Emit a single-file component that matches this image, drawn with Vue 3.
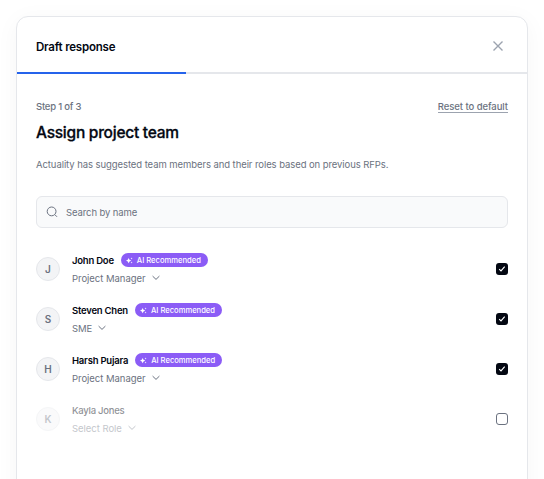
<script setup>
import { reactive } from 'vue'

const members = reactive([
  { name: 'John Doe', role: 'Project Manager', recommended: true, selected: true },
  { name: 'Steven Chen', role: 'SME', recommended: true, selected: true },
  { name: 'Harsh Pujara', role: 'Project Manager', recommended: true, selected: true },
  { name: 'Kayla Jones', role: 'Select Role', recommended: false, selected: false },
])
</script>

<template>
  <main class="page">
    <section class="card">
      <header class="header">
        <span class="header-title">Draft response</span>
        <button class="close" aria-label="Close">
          <svg width="12" height="12" viewBox="0 0 12 12"><path d="M1.5 1.5l9 9M10.5 1.5l-9 9" /></svg>
        </button>
      </header>
      <div class="progress"><div class="progress-bar"></div></div>
      <div class="content">
        <div class="step-row">
          <span class="step">Step 1 of 3</span>
          <a class="reset">Reset to default</a>
        </div>
        <h1 class="title">Assign project team</h1>
        <p class="description">Actuality has suggested team members and their roles based on previous RFPs.</p>
        <div class="search">
          <svg width="12" height="12" viewBox="0 0 12 12"><circle cx="5.6" cy="5.4" r="4.4" /><path d="M8.9 8.7l2.1 2.1" /></svg>
          <span>Search by name</span>
        </div>
        <ul class="members">
          <li v-for="m in members" :key="m.name" class="member" :class="{ muted: !m.selected }">
            <div class="avatar">{{ m.name[0] }}</div>
            <div class="info">
              <div class="name-row">
                <span class="name">{{ m.name }}</span>
                <span v-if="m.recommended" class="badge">
                  <svg width="7" height="7" viewBox="0 0 8 8">
                    <path d="M3 1Q3.5 3.5 6 4Q3.5 4.5 3 7Q2.5 4.5 0 4Q2.5 3.5 3 1Z" />
                    <path d="M6.4 .5Q6.55 1.6 7.6 1.7Q6.55 1.85 6.4 2.9Q6.25 1.85 5.2 1.7Q6.25 1.6 6.4 .5Z" />
                    <path d="M6.4 5.1Q6.55 6.15 7.6 6.3Q6.55 6.45 6.4 7.5Q6.25 6.45 5.2 6.3Q6.25 6.15 6.4 5.1Z" />
                  </svg>
                  <span class="badge-text">AI Recommended</span>
                </span>
              </div>
              <div class="role-row">
                <span class="role">{{ m.role }}</span>
                <svg width="8" height="6" viewBox="0 0 8 6"><path d="M.6 1.1L4 4.4l3.4-3.3" /></svg>
              </div>
            </div>
            <button class="checkbox" :class="{ checked: m.selected }" role="checkbox" :aria-checked="m.selected" @click="m.selected = !m.selected">
              <svg v-if="m.selected" width="12" height="12" viewBox="0 0 12 12"><path d="M3.2 6.2l1.8 1.7 3.7-4.2" /></svg>
            </button>
          </li>
        </ul>
      </div>
    </section>
  </main>
</template>

<style>
body {
  background: #fff;
}
</style>

<style scoped>
* {
  box-sizing: border-box;
}
.page {
  height: 479px;
  padding: 16px 16px 0;
  overflow: hidden;
  font-family: Inter, "Liberation Sans", sans-serif;
  color: #030712;
}
svg {
  display: block;
  flex: none;
  fill: none;
  stroke: currentColor;
  stroke-width: 1;
}
button {
  display: block;
  padding: 0;
  border: 0;
  background: none;
  color: inherit;
}
.card {
  height: 520px;
  border: 1px solid #e5e7eb;
  border-radius: 12px;
  background: #fff;
  box-shadow: 0 4px 24px rgba(0, 0, 0, 0.04);
}
.header {
  display: flex;
  align-items: center;
  justify-content: space-between;
  height: 55px;
  padding: 4px 23px 0 19px;
}
.header-title {
  font-size: 11.5px;
  line-height: 16px;
  font-weight: 600;
  letter-spacing: -0.2px;
}
.close {
  color: #9ca3af;
  margin-top: -1px;
}
.close svg {
  stroke-width: 1.4;
}
.progress {
  height: 2px;
  background: #e5e7eb;
}
.progress-bar {
  width: 33.2%;
  height: 2px;
  background: #2563eb;
}
.content {
  padding: 25px 19px 0;
}
.step-row {
  display: flex;
  justify-content: space-between;
  height: 16px;
  font-size: 9.5px;
  line-height: 16px;
  font-weight: 500;
  color: #6b7280;
}
.step {
  letter-spacing: -0.22px;
}
.reset {
  height: 14px;
  letter-spacing: -0.06px;
  border-bottom: 1px solid #9ca3af;
}
.title {
  margin: 6px 0 0;
  font-size: 15.5px;
  line-height: 24px;
  font-weight: 500;
  letter-spacing: -0.25px;
  -webkit-text-stroke: 0.3px;
}
.description {
  margin: 12px 0 0;
  font-size: 9.5px;
  line-height: 16px;
  letter-spacing: -0.075px;
  color: #6b7280;
  white-space: nowrap;
}
.search {
  display: flex;
  align-items: center;
  gap: 8px;
  height: 32px;
  margin-top: 23px;
  padding: 0 9px;
  border: 1px solid #e5e7eb;
  border-radius: 6px;
  background: #f9fafb;
  color: #6b7280;
  font-size: 9.5px;
  letter-spacing: -0.1px;
}
.members {
  display: flex;
  flex-direction: column;
  gap: 14px;
  margin: 23px 0 0;
  padding: 0;
  list-style: none;
}
.member {
  display: flex;
  align-items: center;
  gap: 12px;
  height: 36px;
}
.avatar {
  display: flex;
  align-items: center;
  justify-content: center;
  width: 24px;
  height: 24px;
  border: 1px solid #e5e7eb;
  border-radius: 50%;
  background: #f3f4f6;
  color: #6b7280;
  font-size: 10px;
  font-weight: 600;
}
.info {
  flex: 1;
}
.name-row {
  display: flex;
  align-items: center;
  gap: 7px;
  height: 18px;
}
.name {
  padding-top: 2px;
  font-size: 9.5px;
  line-height: 18px;
  font-weight: 600;
  letter-spacing: -0.22px;
}
.badge {
  display: flex;
  align-items: center;
  gap: 4px;
  width: 87px;
  height: 14px;
  padding-left: 5px;
  border-radius: 7px;
  background: #8b5cf6;
  color: #fff;
}
.badge svg {
  fill: currentColor;
  stroke: none;
}
.badge-text {
  padding-top: 2px;
  font-size: 7.6px;
  line-height: 14px;
  font-weight: 500;
  white-space: nowrap;
}
.role-row {
  display: flex;
  align-items: center;
  gap: 6px;
  height: 18px;
  color: #6b7280;
}
.role {
  padding-top: 2px;
  font-size: 9.5px;
  line-height: 18px;
  letter-spacing: -0.03px;
}
.checkbox {
  width: 12px;
  height: 12px;
  border: 1px solid #6b7280;
  border-radius: 3px;
}
.checkbox.checked {
  border: 0;
  background: #030712;
  color: #fff;
}
.checkbox svg {
  stroke-width: 1.15;
}
.muted .avatar,
.muted .role-row {
  opacity: 0.4;
}
.muted .name {
  font-weight: 500;
  letter-spacing: -0.25px;
  opacity: 0.45;
}
</style>
